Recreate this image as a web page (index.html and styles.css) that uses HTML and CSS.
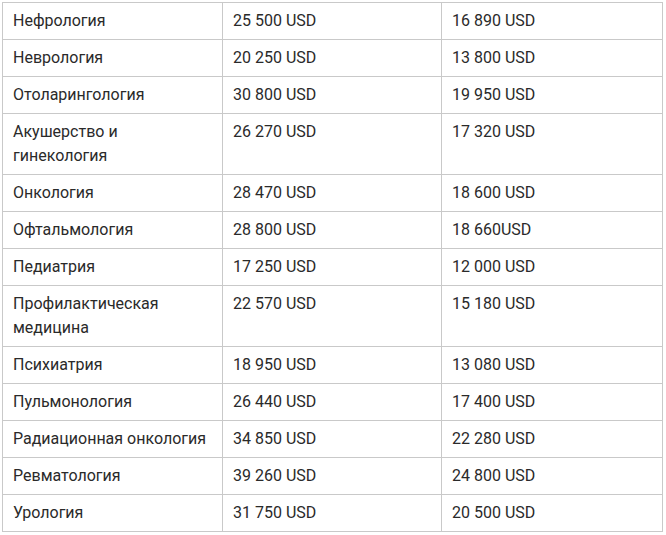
FILE: index.html
```html
<!DOCTYPE html>
<html lang="ru">
<head>
<meta charset="utf-8">
<link rel="stylesheet" href="styles.css">
</head>
<body>
<table class="prices">
<colgroup><col class="c1"><col class="c2"><col class="c3"></colgroup>
<tbody>
<tr><td>Нефрология</td><td>25 500 USD</td><td>16 890 USD</td></tr>
<tr><td>Неврология</td><td>20 250 USD</td><td>13 800 USD</td></tr>
<tr><td>Отоларингология</td><td>30 800 USD</td><td>19 950 USD</td></tr>
<tr><td>Акушерство и гинекология</td><td>26 270 USD</td><td>17 320 USD</td></tr>
<tr><td>Онкология</td><td>28 470 USD</td><td>18 600 USD</td></tr>
<tr><td>Офтальмология</td><td>28 800 USD</td><td>18 660USD</td></tr>
<tr><td>Педиатрия</td><td>17 250 USD</td><td>12 000 USD</td></tr>
<tr><td>Профилактическая медицина</td><td>22 570 USD</td><td>15 180 USD</td></tr>
<tr><td>Психиатрия</td><td>18 950 USD</td><td>13 080 USD</td></tr>
<tr><td>Пульмонология</td><td>26 440 USD</td><td>17 400 USD</td></tr>
<tr><td>Радиационная онкология</td><td>34 850 USD</td><td>22 280 USD</td></tr>
<tr><td>Ревматология</td><td>39 260 USD</td><td>24 800 USD</td></tr>
<tr><td>Урология</td><td>31 750 USD</td><td>20 500 USD</td></tr>
</tbody>
</table>
</body>
</html>
```
FILE: styles.css
```css
html, body {
  margin: 0;
  padding: 0;
  background: #fff;
}
body {
  padding: 2px 0 0 2px;
  font-family: Roboto, "Liberation Sans", Arial, sans-serif;
  font-size: 16px;
  color: #2a2a2a;
}
.prices {
  border-collapse: collapse;
  table-layout: fixed;
  width: 660px;
}
.c1 { width: 220px; }
.c2 { width: 219px; }
.c3 { width: 221px; }
.prices td {
  border: 1px solid #c9c9c9;
  padding: 6px 10px;
  line-height: 24px;
  vertical-align: top;
  text-align: left;
}
```
